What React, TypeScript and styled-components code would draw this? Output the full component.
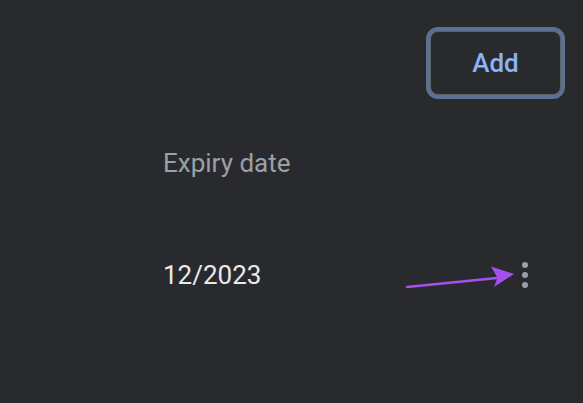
import styled, { createGlobalStyle } from 'styled-components'

const GlobalStyle = createGlobalStyle`
  html, body {
    margin: 0;
    padding: 0;
    background: #292a2d;
  }
  body {
    font-family: Roboto, "Liberation Sans", sans-serif;
  }
`

const Page = styled.div`
  position: relative;
  width: 583px;
  height: 403px;
  background: #292a2d;
  overflow: hidden;
`

const Header = styled.div`
  display: flex;
  justify-content: flex-end;
  padding: 31px 22px 0 0;
`

const AddButton = styled.button`
  width: 131px;
  height: 64px;
  box-sizing: border-box;
  background: #292a2d;
  border: 1px solid #5f6368;
  border-radius: 8px;
  box-shadow: 0 0 0 4px #5b7194;
  color: #8ab4f8;
  font-family: Roboto, "Liberation Sans", sans-serif;
  font-size: 26px;
  font-weight: 500;
  cursor: pointer;
`

const Table = styled.div`
  display: flex;
  flex-direction: column;
  padding-left: 163px;
  padding-right: 55px;
`

const LabelRow = styled.div`
  display: flex;
  align-items: center;
  height: 54px;
  margin-top: 41px;
  color: #9aa0a6;
  font-size: 26px;
`

const ItemRow = styled.div`
  display: flex;
  align-items: center;
  justify-content: space-between;
  height: 60px;
  margin-top: 55px;
  color: #e8eaed;
  font-size: 26px;
`

const Kebab = styled.div`
  display: flex;
  flex-direction: column;
  gap: 4px;
  padding: 4px;
  margin-right: -4px;
`

const Dot = styled.span`
  width: 6px;
  height: 6px;
  border-radius: 50%;
  background: #9aa0a6;
`

const Arrow = styled.svg`
  position: absolute;
  left: 400px;
  top: 260px;
`

export default function App() {
  return (
    <Page>
      <GlobalStyle />
      <Header>
        <AddButton>Add</AddButton>
      </Header>
      <Table>
        <LabelRow>Expiry date</LabelRow>
        <ItemRow>
          <span>12/2023</span>
          <Kebab>
            <Dot />
            <Dot />
            <Dot />
          </Kebab>
        </ItemRow>
      </Table>
      <Arrow width="120" height="35" viewBox="0 0 120 35">
        <path d="M7 27 L97 18" stroke="#a64ff0" strokeWidth="2.5" strokeLinecap="round" />
        <path d="M114 14 L91 6.5 L97.5 17.8 L94 27 Z" fill="#a64ff0" />
      </Arrow>
    </Page>
  )
}
